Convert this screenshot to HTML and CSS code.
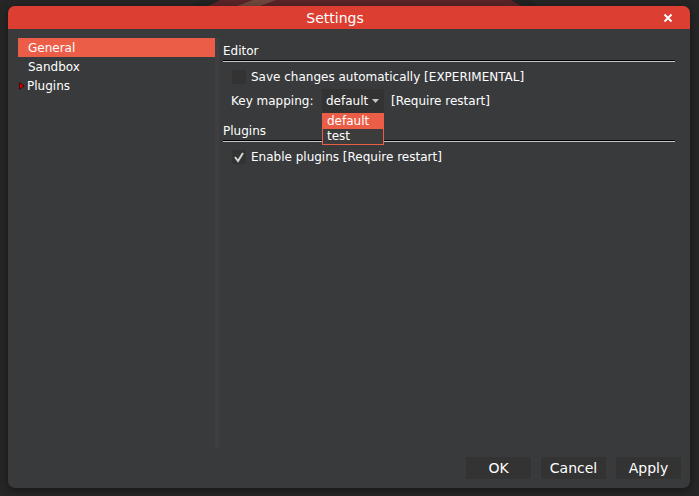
FILE: index.html
```html
<!DOCTYPE html>
<html lang="en">
<head>
<meta charset="utf-8">
<title>Settings</title>
<link rel="stylesheet" href="styles.css">
</head>
<body>
<svg class="backdrop" viewBox="0 0 699 12" preserveAspectRatio="xMidYMin slice" aria-hidden="true">
  <path d="M187 6 L204 0 H530 L539 6 V12 H187Z" fill="#202322"/>
  <path d="M208 6 L220 0 H511 L521 6 V12 H208Z" fill="#5b2529"/>
  <path d="M237 6 L253 0 H276 L260 6Z" fill="#70483f"/>
</svg>
<main class="window">
  <header class="titlebar">
    <h1>Settings</h1>
    <button class="close" type="button" aria-label="Close">
      <svg viewBox="0 0 10 10" width="10" height="10"><path d="M1.5 1.5 8.5 8.5M8.5 1.5 1.5 8.5" stroke="#fff" stroke-width="2" fill="none"/></svg>
    </button>
  </header>
  <div class="body">
    <nav class="sidebar">
      <a class="item selected" href="#general">General</a>
      <a class="item" href="#sandbox">Sandbox</a>
      <a class="item parent" href="#plugins"><svg viewBox="0 0 6 8" width="6" height="8" aria-hidden="true"><path d="M.5 .8 5.3 4 .5 7.2Z" fill="#d40000" stroke="#500" stroke-width="1"/></svg>Plugins</a>
    </nav>
    <div class="splitter"></div>
    <div class="panel">
      <section>
        <h2>Editor</h2>
        <div class="row">
          <label class="check"><input type="checkbox">Save changes automatically [EXPERIMENTAL]</label>
        </div>
        <div class="mapping">
          <label for="keys">Key mapping:</label>
          <div class="combo">
            <select id="keys"><option>default</option><option>test</option></select>
            <svg class="arrow" viewBox="0 0 7 4" width="7" height="4" aria-hidden="true"><path d="M0 0H7L3.5 4Z" fill="#c4c6c6"/></svg>
            <ul class="menu">
              <li class="active">default</li>
              <li>test</li>
            </ul>
          </div>
          <span>[Require restart]</span>
        </div>
      </section>
      <section>
        <h2>Plugins</h2>
        <div class="row">
          <label class="check"><input type="checkbox" checked><svg class="tick" viewBox="0 0 14 14" width="14" height="14" aria-hidden="true"><path d="M3 7 6 11 11 3" stroke="#d4d6d6" stroke-width="2" fill="none"/></svg>Enable plugins [Require restart]</label>
        </div>
      </section>
    </div>
  </div>
  <footer class="actions">
    <button type="button">OK</button>
    <button type="button">Cancel</button>
    <button type="button">Apply</button>
  </footer>
</main>
</body>
</html>
```
FILE: styles.css
```css
* { box-sizing: border-box; }
body {
  margin: 0;
  min-height: 100vh;
  padding: 6px 9px 8px 8px;
  display: flex;
  background: #262626;
  color: #fff;
  font: 12px/16px "DejaVu Sans", sans-serif;
}
h1, h2, ul { margin: 0; padding: 0; font-weight: normal; }
button, select { font: inherit; color: inherit; border: 0; padding: 0; }
.backdrop { position: absolute; top: 0; left: 0; width: 100%; height: 12px; }
.window {
  position: relative;
  flex: 1;
  display: flex;
  flex-direction: column;
  background: #393a3c;
  border-radius: 7px;
  box-shadow: 0 2px 8px rgba(0, 0, 0, .45);
}
.titlebar {
  display: grid;
  grid-template-columns: 32px 1fr 32px;
  align-items: center;
  height: 23px;
  padding: 0 6px;
  background: #dc3f31;
  border-radius: 7px 7px 0 0;
}
.titlebar h1 { grid-column: 2; font-size: 14px; line-height: 20px; text-align: center; padding-right: 28px; }
.close { height: 20px; display: grid; place-items: center; background: none; }
.body { flex: 1; display: flex; padding: 9px 15px 0 10px; }
.sidebar { width: 197px; }
.item {
  display: flex;
  align-items: center;
  gap: 2px;
  height: 19px;
  padding-left: 10px;
  color: #fff;
  text-decoration: none;
}
.item.parent { padding-left: 1px; }
.selected { background: #ec5d48; }
.splitter { width: 4px; background: #3f3e40; }
.panel { flex: 1; display: flex; flex-direction: column; gap: 10px; padding: 5px 0 0 4px; }
h2 {
  padding-bottom: 2px;
  font-size: 12px;
  line-height: 16px;
  border-bottom: 1px solid #c3c4c4;
  box-shadow: inset 0 -1px #000;
}
.row { padding: 7px 0 4px 9px; }
.check { position: relative; display: flex; align-items: center; gap: 5px; }
.check input { appearance: none; margin: 0; width: 14px; height: 14px; background: #333; }
.tick { position: absolute; left: 0; }
.mapping { display: flex; align-items: center; gap: 7px; padding-left: 8px; }
.mapping label { min-width: 84px; }
.combo { position: relative; display: flex; align-items: center; height: 24px; background: #333; }
.combo select { appearance: none; width: 62px; height: 24px; padding-left: 4px; background: none; outline: 0; }
.arrow { position: absolute; right: 5px; }
.menu {
  position: absolute;
  top: 24px;
  left: 0;
  width: 100%;
  border: 1px solid #ec5d48;
  background: #3c3c3d;
  list-style: none;
  line-height: 15px;
}
.menu li { padding-left: 4px; }
.menu .active { background: #ec5d48; }
.actions { display: flex; justify-content: flex-end; gap: 10px; padding: 8px 9px 9px; }
.actions button { width: 65px; height: 22px; background: #333; font-size: 14px; }
```
